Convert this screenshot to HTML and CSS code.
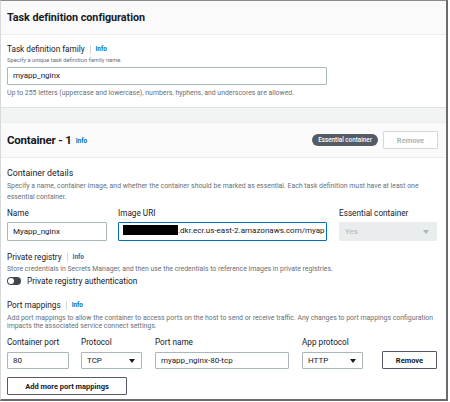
FILE: index.html
```html
<!DOCTYPE html>
<html>
<head>
<meta charset="utf-8">
<link rel="stylesheet" href="styles.css">
</head>
<body>
<div class="frame">
  <section class="panel panel-task">
    <div class="panel-head"><h2 class="title">Task definition configuration</h2></div>
    <div class="panel-body first">
      <div class="label">Task definition family <span class="sep"></span><a class="info">Info</a></div>
      <div class="desc small">Specify a unique task definition family name.</div>
      <div class="input wide">myapp_nginx</div>
      <div class="desc help">Up to 255 letters (uppercase and lowercase), numbers, hyphens, and underscores are allowed.</div>
    </div>
  </section>
  <section class="panel panel-container">
    <div class="panel-head row">
      <h2 class="title big">Container - 1 <a class="info">Info</a></h2>
      <div class="head-actions">
        <span class="badge">Essential container</span>
        <button class="btn disabled">Remove</button>
      </div>
    </div>
    <div class="panel-body second">
      <div class="label sub">Container details</div>
      <div class="desc lines">Specify a name, container image, and whether the container should be marked as essential. Each task definition must have at least one<br>essential container.</div>
      <div class="fields fields-main">
        <div class="field">
          <div class="label">Name</div>
          <div class="input">Myapp_nginx</div>
        </div>
        <div class="field">
          <div class="label">Image URI</div>
          <div class="input focus"><span class="redact"></span>.dkr.ecr.us-east-2.amazonaws.com/myap</div>
        </div>
        <div class="field">
          <div class="label">Essential container</div>
          <div class="input select readonly">Yes<span class="caret"></span></div>
        </div>
      </div>
      <div class="group">
        <div class="label">Private registry <span class="sep"></span><a class="info">Info</a></div>
        <div class="desc">Store credentials in Secrets Manager, and then use the credentials to reference images in private registries.</div>
        <div class="toggle-row"><span class="toggle"><span class="knob"></span></span>Private registry authentication</div>
      </div>
      <div class="group ports">
        <div class="label">Port mappings <span class="sep"></span><a class="info">Info</a></div>
        <div class="desc lines2">Add port mappings to allow the container to access ports on the host to send or receive traffic. Any changes to port mappings configuration<br>impacts the associated service connect settings.</div>
        <div class="fields fields-ports">
          <div class="field">
            <div class="label">Container port</div>
            <div class="input">80</div>
          </div>
          <div class="field">
            <div class="label">Protocol</div>
            <div class="input select">TCP<span class="caret"></span></div>
          </div>
          <div class="field">
            <div class="label">Port name</div>
            <div class="input">myapp_nginx-80-tcp</div>
          </div>
          <div class="field">
            <div class="label">App protocol</div>
            <div class="input select">HTTP<span class="caret"></span></div>
          </div>
          <div class="field end">
            <button class="btn">Remove</button>
          </div>
        </div>
        <button class="btn add">Add more port mappings</button>
      </div>
    </div>
  </section>
</div>
</body>
</html>
```
FILE: styles.css
```css
* { box-sizing: border-box; }
html, body { margin: 0; padding: 0; background: #fff; }
body { font-family: Roboto, "Liberation Sans", sans-serif; color: #16191f; }
.frame {
  width: 448px; height: 401px;
  border-top: 1px solid #8a8a8a;
  border-right: 2px solid #6b6b6b;
  border-bottom: 2px solid #6b6b6b;
  border-left: 1px solid #d5d9d9;
  background: #f2f3f3;
  display: flex; flex-direction: column; gap: 14px;
  overflow: hidden;
}
.panel { background: #fff; flex-shrink: 0; }
.panel-task { height: 107px; border-bottom: 1px solid #dfe3e3; }
.panel-container { flex: 1 0 auto; }
.panel-head {
  background: #fafafa; border-bottom: 1px solid #eaeded;
  height: 34px; padding: 0 6px; display: flex; align-items: center;
}
.panel-head.row { height: 36px; justify-content: space-between; padding-right: 8px; border-top: 1px solid #eaeded; }
.title { margin: 0; font-size: 10.8px; font-weight: 700; letter-spacing: -0.05px; color: #16191f; }
.title.big { font-size: 11.5px; letter-spacing: -0.2px; display: flex; align-items: center; gap: 4px; }
.title .info { font-size: 6.5px; margin-top: 2px; letter-spacing: 0; }
.head-actions { display: flex; align-items: center; gap: 5px; }
.badge {
  background: #545b64; color: #fff; font-size: 6.3px; font-weight: 500;
  height: 12px; line-height: 12px; padding: 0 4px; border-radius: 6px; width: 66px; text-align: center;
}
.btn {
  font-family: inherit; background: #fff; border: 1px solid #545b64; color: #16191f;
  font-size: 7.5px; font-weight: 700; height: 19px; padding: 0 10px; border-radius: 1px; cursor: pointer;
}
.btn.disabled { border-color: #d5dbdb; color: #aab7b8; width: 55px; height: 18px; padding: 0; }
.panel-body { padding: 0 6px; }
.panel-body.first { padding-top: 8px; }
.label { font-size: 8.2px; line-height: 12px; height: 12px; color: #16191f; display: flex; align-items: center; }
.sep { display: inline-block; width: 1px; height: 9px; background: #d5dbdb; margin: 0 5px; }
.info { color: #0073bb; font-size: 6.3px; font-weight: 700; }
.desc { font-size: 6.9px; line-height: 9px; color: #687078; white-space: nowrap; }
.desc.small { font-size: 5.8px; }
.first .desc { margin-top: 1px; height: 9px; }
.input {
  height: 18px; border: 1px solid #aab7b8; border-radius: 1px; background: #fff;
  font-size: 8px; line-height: 16px; padding: 0 5px; white-space: nowrap; overflow: hidden;
  color: #16191f; flex-shrink: 0;
}
.input.wide { width: 320px; margin-top: 2px; }
.first .help { margin-top: 4px; }
.second { padding-top: 9px; }
.label.sub { font-size: 8.8px; }
.lines { margin-top: 2px; line-height: 11px; }
.fields { display: flex; }
.fields-main { gap: 11px; margin-top: 4px; }
.fields-main .field:nth-child(1) { width: 100px; }
.fields-main .field:nth-child(2) { width: 209px; }
.fields-main .field:nth-child(3) { width: 98px; margin-left: 1px; }
.fields-main .label { margin-bottom: 3px; }
.fields-main .input { height: 19px; line-height: 17px; }
.input.focus { border: 1.5px solid #0073bb; padding-left: 4px; line-height: 16px; text-overflow: clip; }
.redact { display: inline-block; width: 55px; height: 10px; background: #000; vertical-align: -2px; }
.select { position: relative; }
.caret {
  position: absolute; right: 6px; top: 6px; width: 0; height: 0;
  border-left: 3px solid transparent; border-right: 3px solid transparent; border-top: 4px solid #16191f;
}
.readonly { background: #eaeded; border-color: #eaeded; color: #aab7b8; }
.readonly .caret { right: 7px; top: 7px; border-top-color: #aab7b8; }
.group { margin-top: 10px; }
.group .desc { margin-top: 2px; }
.toggle-row { display: flex; align-items: center; gap: 6px; font-size: 8.3px; line-height: 12px; margin-top: 1px; }
.toggle { width: 14px; height: 8px; border-radius: 4px; background: #414750; display: flex; align-items: center; padding: 0 1px; }
.knob { width: 6px; height: 6px; border-radius: 50%; background: #fff; }
.ports { margin-top: 12px; }
.ports .lines2 { line-height: 8px; margin-top: 3px; }
.fields-ports { margin-top: 6px; gap: 12px; align-items: flex-end; }
.fields-ports .label { margin-bottom: 4px; }
.fields-ports .field:nth-child(1) { width: 62px; }
.fields-ports .field:nth-child(2) { width: 61px; }
.fields-ports .field:nth-child(3) { width: 134px; margin-left: 1px; }
.fields-ports .field:nth-child(4) { width: 61px; margin-left: 1px; }
.fields-ports .field.end { margin-left: 7px; }
.fields-ports .input { height: 17px; line-height: 15px; }
.fields-ports .btn { width: 55px; height: 18px; padding: 0; }
.btn.add { margin-top: 8px; width: 120px; height: 18px; padding: 0; }
```
